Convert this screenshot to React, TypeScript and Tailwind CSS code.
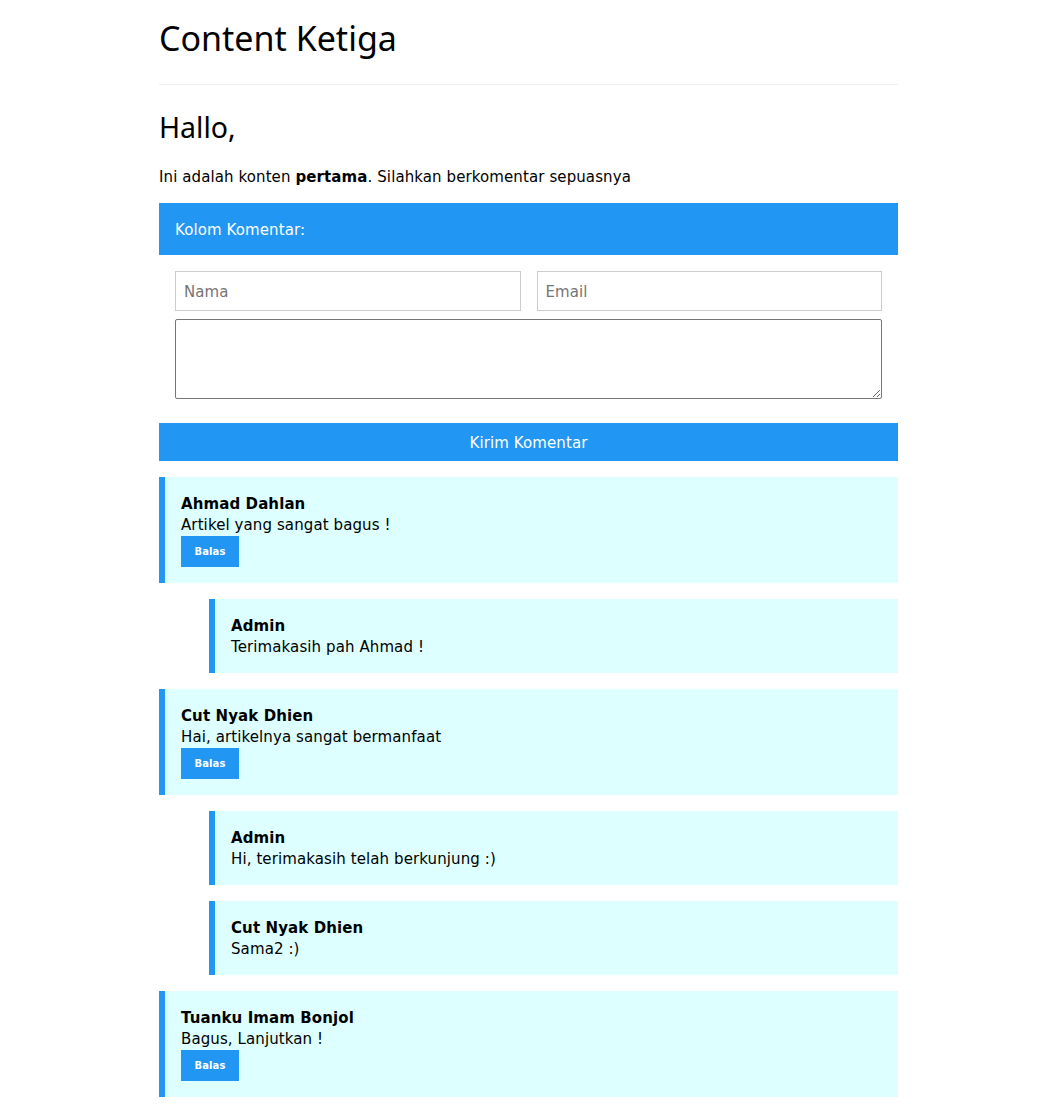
import React from "react";

type C = { name: string; text: string; reply?: boolean; balas?: boolean };

const comments: C[] = [
  { name: "Ahmad Dahlan", text: "Artikel yang sangat bagus !", balas: true },
  { name: "Admin", text: "Terimakasih pah Ahmad !", reply: true },
  { name: "Cut Nyak Dhien", text: "Hai, artikelnya sangat bermanfaat", balas: true },
  { name: "Admin", text: "Hi, terimakasih telah berkunjung :)", reply: true },
  { name: "Cut Nyak Dhien", text: "Sama2 :)", reply: true },
  { name: "Tuanku Imam Bonjol", text: "Bagus, Lanjutkan !", balas: true },
];

export default function App() {
  return (
    <div
      className="min-h-[1112px] bg-white text-black text-[15px] leading-[1.5] tracking-[0.1px]"
      style={{ fontFamily: "Verdana, 'DejaVu Sans', sans-serif" }}
    >
      <div className="w-[739px] mx-auto pt-[10px] pb-4">
        <h1
          className="text-[34px] leading-[54px] font-normal tracking-normal pt-[1px]"
          style={{ fontFamily: "'Segoe UI', 'Noto Sans', sans-serif" }}
        >
          Content Ketiga
        </h1>
        <hr className="mt-[19px] mb-5 border-0 border-t border-[#eeeeee]" />
        <h2
          className="text-[28.5px] leading-[45px] font-normal tracking-normal"
          style={{ fontFamily: "'Segoe UI', 'Noto Sans', sans-serif" }}
        >
          Hallo,
        </h2>
        <p className="mt-[15px] mb-[14px] pt-[1px] leading-[22.5px]">
          Ini adalah konten <b>pertama</b>. Silahkan berkomentar sepuasnya
        </p>
        <div className="h-[52px] bg-[#2196f3] text-white flex items-center px-4 pt-[4px]">
          Kolom Komentar:
        </div>
        <div className="px-4 pt-4">
          <div className="flex gap-4">
            <input
              placeholder="Nama"
              className="flex-1 min-w-0 h-[40px] border border-[#cccccc] px-2 pt-[2px] text-[15px] placeholder:text-[#757575] outline-none"
              style={{ fontFamily: "Verdana, 'DejaVu Sans', sans-serif" }}
            />
            <input
              placeholder="Email"
              className="flex-1 min-w-0 h-[40px] border border-[#cccccc] px-2 pt-[2px] text-[15px] placeholder:text-[#757575] outline-none"
              style={{ fontFamily: "Verdana, 'DejaVu Sans', sans-serif" }}
            />
          </div>
          <textarea className="block w-full h-[80px] mt-2 border border-[#767676] rounded-[2px] outline-none" />
        </div>
        <button className="block w-full h-[38px] mt-6 pt-[3px] bg-[#2196f3] text-white text-[15px] text-center">
          Kirim Komentar
        </button>
        <div className="flex flex-col gap-4 mt-4">
          {comments.map((c, i) => (
            <div
              key={i}
              className={`${c.reply ? "ml-[50px] pb-[15px]" : "pb-[16px]"} bg-[#ddffff] border-l-[6px] border-[#2196f3] pl-4 pr-4 pt-[16px]`}
            >
              <div className="font-bold leading-[22px]">{c.name}</div>
              <div className="leading-[21px]">{c.text}</div>
              {c.balas && (
                <button className="w-[58px] h-[31px] bg-[#2196f3] text-white text-[10px] font-bold flex items-center justify-center pt-[1px]">
                  Balas
                </button>
              )}
            </div>
          ))}
        </div>
      </div>
    </div>
  );
}
